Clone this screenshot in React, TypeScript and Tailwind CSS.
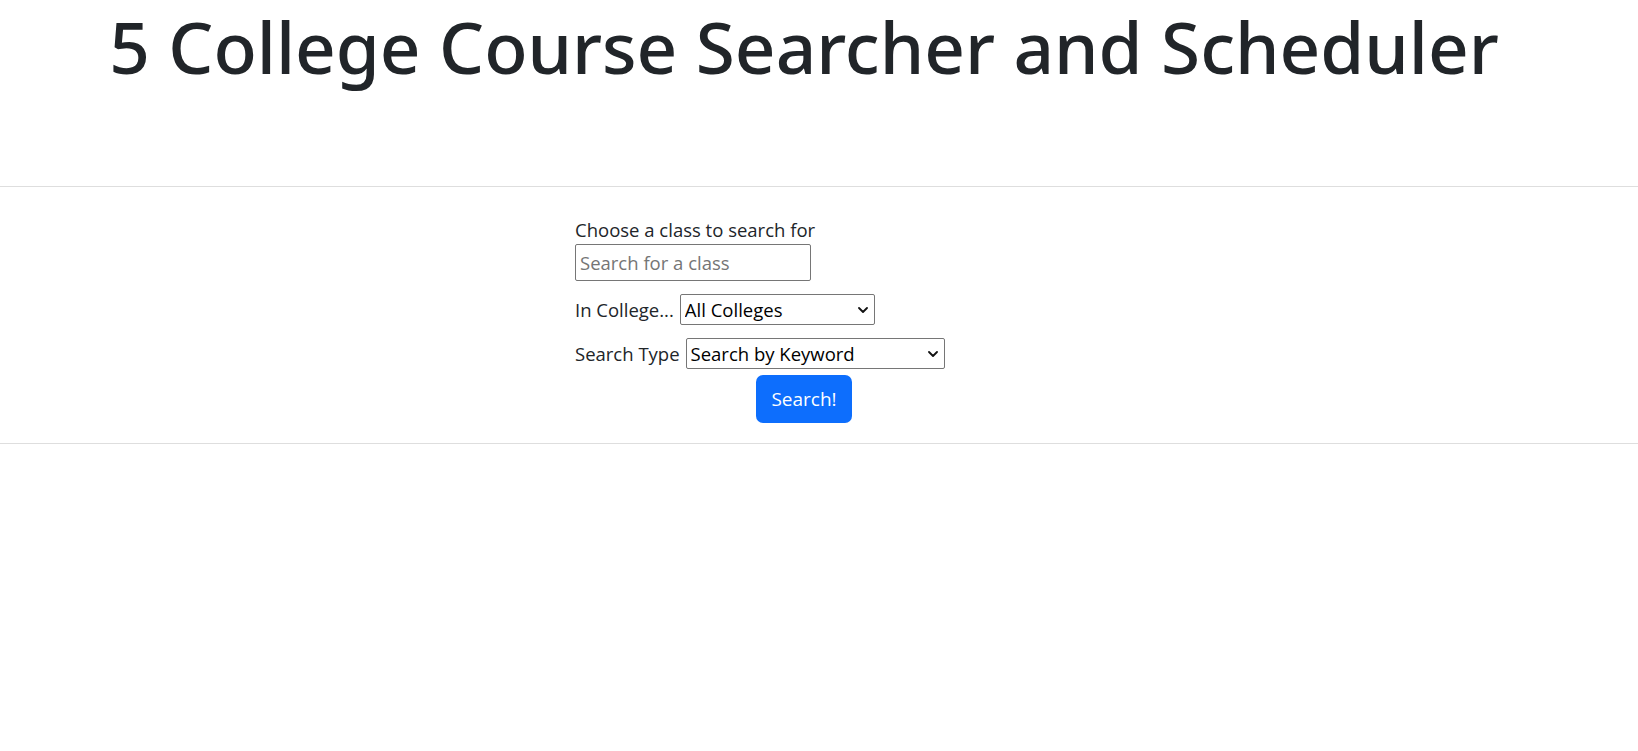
import { useState } from 'react';

function Chevron() {
  return (
    <svg
      className="pointer-events-none absolute right-[7px] top-1/2 -translate-y-1/2"
      width="10"
      height="7"
      viewBox="0 0 10 7"
      fill="none"
    >
      <path d="M1 1.5l4 4 4-4" stroke="#111" strokeWidth="1.8" strokeLinecap="round" strokeLinejoin="round" />
    </svg>
  );
}

export default function App() {
  const [query, setQuery] = useState('');
  const [college, setCollege] = useState('all');
  const [searchType, setSearchType] = useState('keyword');

  return (
    <div className="min-h-screen bg-white text-[#212529] font-['Open_Sans',sans-serif]">
      <div className="pr-[30px]">
        {/* Title */}
        <h1 className="text-center text-[71px] font-['Noto_Sans',sans-serif] font-medium leading-[1.2] pt-[4px] pb-[97px] whitespace-nowrap">
          5 College Course Searcher and Scheduler
        </h1>
      </div>

      <hr className="border-t border-[#dedede]" />

      {/* Search form */}
      <div className="pr-[30px] pt-[29px] pb-[20px]">
        <form
          className="w-[458px] mx-auto text-[18.5px]"
          onSubmit={(e) => e.preventDefault()}
        >
          <label htmlFor="class-search" className="block leading-[28px]">
            Choose a class to search for
          </label>
          <input
            id="class-search"
            type="text"
            value={query}
            onChange={(e) => setQuery(e.target.value)}
            placeholder="Search for a class"
            className="block w-[236px] h-[37px] border border-[#767676] rounded-[2px] px-[4px] outline-none placeholder:text-[#757575]"
          />

          <div className="flex items-center gap-[6px] mt-[13px]">
            <label htmlFor="college">In College...</label>
            <div className="relative">
              <select
                id="college"
                value={college}
                onChange={(e) => setCollege(e.target.value)}
                className="appearance-none w-[195px] h-[31px] border border-[#767676] rounded-[2px] pl-[4px] pr-6 bg-white text-black outline-none"
              >
                <option value="all">All Colleges</option>
                <option value="amherst">Amherst College</option>
                <option value="hampshire">Hampshire College</option>
                <option value="mtholyoke">Mount Holyoke College</option>
                <option value="smith">Smith College</option>
                <option value="umass">UMass Amherst</option>
              </select>
              <Chevron />
            </div>
          </div>

          <div className="flex items-center gap-[6px] mt-[13px]">
            <label htmlFor="search-type">Search Type</label>
            <div className="relative">
              <select
                id="search-type"
                value={searchType}
                onChange={(e) => setSearchType(e.target.value)}
                className="appearance-none w-[259px] h-[31px] border border-[#767676] rounded-[2px] pl-[4px] pr-6 bg-white text-black outline-none"
              >
                <option value="keyword">Search by Keyword</option>
                <option value="number">Search by Course Number</option>
                <option value="instructor">Search by Instructor</option>
              </select>
              <Chevron />
            </div>
          </div>

          <div className="flex justify-center mt-[6px]">
            <button
              type="submit"
              className="bg-[#0d6efd] hover:bg-[#0b5ed7] text-white text-[19px] h-[48px] px-[15px] rounded-[7px]"
            >
              Search!
            </button>
          </div>
        </form>
      </div>

      <hr className="border-t border-[#dedede]" />
    </div>
  );
}
